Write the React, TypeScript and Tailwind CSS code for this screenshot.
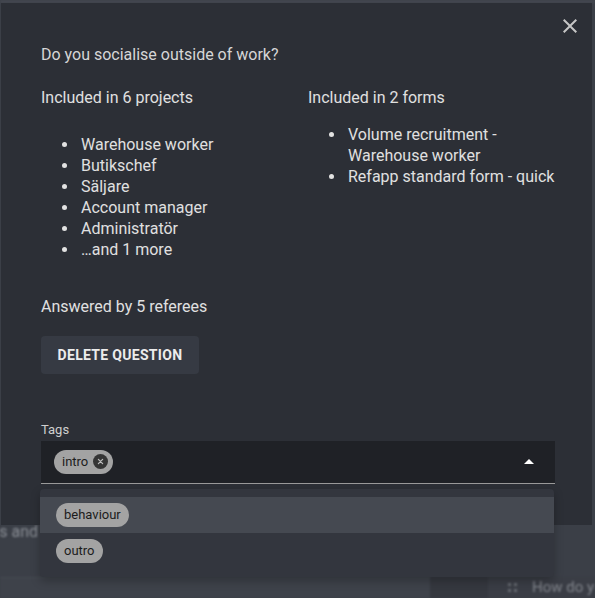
import { useState } from 'react';

const projects = ['Warehouse worker', 'Butikschef', 'Säljare', 'Account manager', 'Administratör', '…and 1 more'];
const forms = ['Volume recruitment - Warehouse worker', 'Refapp standard form - quick'];

function Bullet({ text, wrap }: { text: string; wrap?: boolean }) {
  return (
    <li className="flex items-start leading-[21px]">
      <span className="flex h-[21px] w-[40px] shrink-0 items-center pl-[21px]">
        <span className="h-[5px] w-[5px] rounded-full bg-[#e2e2e2]" />
      </span>
      <span className={wrap ? 'w-[212px]' : ''}>{text}</span>
    </li>
  );
}

function Chip({ label, onDelete }: { label: string; onDelete?: () => void }) {
  return (
    <span className="inline-flex h-[24px] items-center rounded-full bg-[#a3a3a3] pl-2 pr-2 text-[13px] text-[#1c1c1c]">
      <span>{label}</span>
      {onDelete && (
        <button onClick={onDelete} className="ml-[5px] -mr-[3px] flex h-[15px] w-[15px] items-center justify-center rounded-full bg-[#353535]">
          <svg viewBox="0 0 10 10" className="h-[7px] w-[7px]" stroke="#bdbdbd" strokeWidth="1.8" strokeLinecap="round">
            <path d="M2 2l6 6M8 2l-6 6" />
          </svg>
        </button>
      )}
    </span>
  );
}

export default function App() {
  const [tags, setTags] = useState(['intro']);
  const [hover] = useState('behaviour');

  return (
    <div className="relative h-[598px] w-[595px] overflow-hidden bg-[#3b3f47] font-['Roboto',sans-serif]">
      {/* page behind the backdrop */}
      <div className="flex h-full flex-col blur-[1.2px]">
        <div className="h-[3px] bg-[#434750]" />
        <div className="h-[517px]" />
        <div className="flex h-[22px] w-[38px] justify-end overflow-hidden whitespace-nowrap text-[16px] text-[#8a8e95]">
          questions and
        </div>
        <div className="h-[35px]" />
        <div className="flex h-[21px] items-center">
          <div className="h-full w-[430px] border-t border-[#474b53] bg-[#3e424a]" />
          <div className="h-full w-[58px] bg-[#35383f]" />
          <div className="flex h-full flex-1 items-center overflow-hidden whitespace-nowrap bg-[#3a3d45] pl-[20px] text-[15px] text-[#80848b]">
            <span className="mr-[15px] grid shrink-0 grid-cols-2 gap-[3px]">
              <span className="h-[3px] w-[3px] bg-[#666a71]" />
              <span className="h-[3px] w-[3px] bg-[#666a71]" />
              <span className="h-[3px] w-[3px] bg-[#666a71]" />
              <span className="h-[3px] w-[3px] bg-[#666a71]" />
            </span>
            How do yo
          </div>
        </div>
      </div>

      {/* dialog */}
      <div className="absolute left-[1px] top-[3px] h-[522px] w-[591px] bg-[#2c2f36] px-[40px] pt-[40px] text-[16px] text-[#e0e0e0]">
        <button className="absolute left-[557px] top-[11px] text-[#c6c6c6]">
          <svg viewBox="0 0 24 24" className="h-[24px] w-[24px]" fill="currentColor">
            <path d="M19 6.41L17.59 5 12 10.59 6.41 5 5 6.41 10.59 12 5 17.59 6.41 19 12 13.41 17.59 19 19 17.59 13.41 12z" />
          </svg>
        </button>

        <p className="leading-[24px] text-[#d6d6d6]">Do you socialise outside of work?</p>

        <div className="mt-[19px] grid grid-cols-[267px_1fr]">
          <div>
            <p className="leading-[24px]">Included in 6 projects</p>
            <ul className="mt-[24px]">
              {projects.map((p) => (
                <Bullet key={p} text={p} />
              ))}
            </ul>
          </div>
          <div>
            <p className="leading-[24px]">Included in 2 forms</p>
            <ul className="mt-[14px]">
              {forms.map((f) => (
                <Bullet key={f} text={f} wrap />
              ))}
            </ul>
          </div>
        </div>

        <p className="mt-[35px] leading-[24px]">Answered by 5 referees</p>

        <button className="mt-[17px] flex h-[38px] w-[158px] items-center justify-center rounded-[4px] bg-[#363a43] text-[14px] font-bold tracking-[0.3px] text-[#ececec]">
          DELETE QUESTION
        </button>

        <p className="mt-[48px] text-[13px] leading-[16px] text-[#cfcfcf]">Tags</p>
        <div className="mt-[3px] flex h-[43px] w-[514px] items-center border-b border-[#9a9a9a] bg-[#1f2126] pb-[1px] pl-[13px] pr-[14px]">
          <div className="flex flex-1 gap-1">
            {tags.map((t) => (
              <Chip key={t} label={t} onDelete={() => setTags(tags.filter((x) => x !== t))} />
            ))}
          </div>
          <svg viewBox="0 0 24 24" className="h-[24px] w-[24px]" fill="#ffffff">
            <path d="M7 14l5-5 5 5z" />
          </svg>
        </div>
      </div>

      {/* dropdown menu */}
      <div className="absolute left-[40px] top-[489px] w-[514px] rounded-[4px] bg-[#33363e] py-[8px] shadow-[0_4px_10px_rgba(0,0,0,0.25)]">
        {['behaviour', 'outro'].map((o) => (
          <div key={o} className={`flex h-[36px] items-center px-[16px] ${o === hover ? 'bg-[#454951]' : ''}`}>
            <Chip label={o} />
          </div>
        ))}
      </div>
    </div>
  );
}
